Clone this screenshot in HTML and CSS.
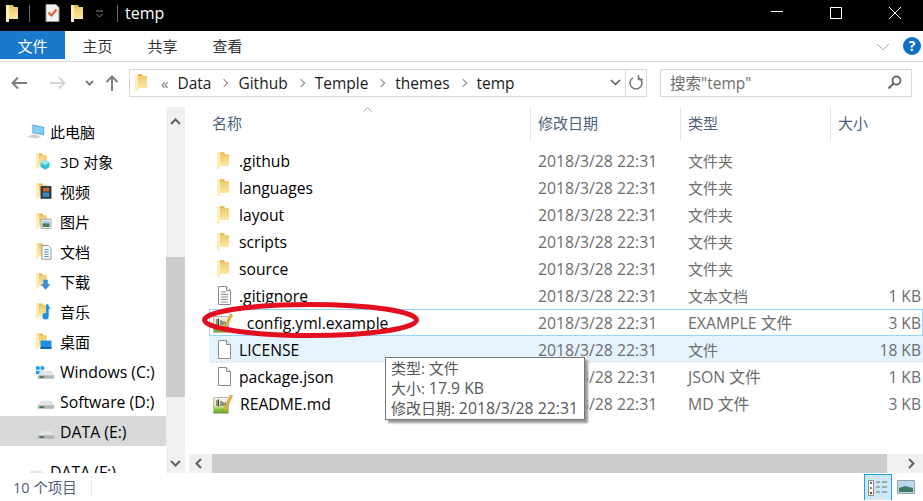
FILE: index.html
```html
<!DOCTYPE html>
<html lang="zh-CN">
<head>
    <meta charset="UTF-8">
    <meta name="viewport" content="width=device-width, initial-scale=1.0">
    <title>temp</title>
    <link rel="stylesheet" href="styles.css">
</head>
<body>
<svg class="defs" width="0" height="0">
    <defs>
        <linearGradient id="fold" x1="0" y1="0" x2="0" y2="1">
            <stop offset="0" stop-color="#eec566"/>
            <stop offset=".5" stop-color="#f8d98a"/>
            <stop offset="1" stop-color="#fdeeb4"/>
        </linearGradient>
        <linearGradient id="paper" x1="0" y1="0" x2="0" y2="1">
            <stop offset="0" stop-color="#f4f4ea"/>
            <stop offset=".5" stop-color="#dfe8b8"/>
            <stop offset=".75" stop-color="#8cc63e"/>
            <stop offset="1" stop-color="#5c9e24"/>
        </linearGradient>
        <symbol id="folder" viewBox="0 0 12 17">
            <path d="M0 0h7l1 2h4v12H3v3H0z" fill="url(#fold)"/>
            <path d="M0 0h3v17l-3-2z" fill="#feeeb8"/>
            <path d="M3 1h4v1H3z" fill="#e0b44c"/>
        </symbol>
        <symbol id="doc" viewBox="0 0 15 19">
            <path d="M1.500.500h8l4 4v14h-12z" fill="#fff" stroke="#8c8c8c"/>
            <path d="M9.500.500v4h4" fill="#eee" stroke="#8c8c8c"/>
        </symbol>
        <symbol id="txt" viewBox="0 0 15 19">
            <path d="M1.500.500h8l4 4v14h-12z" fill="#fff" stroke="#8c8c8c"/>
            <path d="M9.500.500v4h4" fill="#eee" stroke="#8c8c8c"/>
            <path d="M4 6h5M4 8.500h7M4 11h7M4 13.500h7M4 16h7" stroke="#8c8c8c" fill="none"/>
        </symbol>
        <symbol id="note" viewBox="0 0 20 20">
            <path d="M.5 3.500h15v16H.5z" fill="url(#paper)" stroke="#b9b9b0"/>
            <path d="M4 6v6M5.500 5.500v7M8 7v5M10 8v4M12 8.500v3" stroke="#3c3c3c" fill="none"/>
            <path d="M11 14.500L17.500 1l2 1-6.500 13.500-2.800 2z" fill="#efb93c" stroke="#a8782a" stroke-width=".5"/>
        </symbol>
        <symbol id="disk" viewBox="0 0 20 12">
            <path d="M1 7l4-5h11l3 5z" fill="#e4e4e4"/>
            <path d="M1 7h18v4H1z" fill="#b4b4b4"/>
            <path d="M3 8h5v2H3z" fill="#3a7a45"/>
        </symbol>
    </defs>
</svg>

<div class="window">
    <!-- barre de titre -->
    <header class="titlebar">
        <svg class="ico-folder"><use href="#folder"/></svg>
        <span class="bar-sep sep-a"></span>
        <svg class="ico-check" viewBox="0 0 15 18">
            <path d="M1 .5h10l3 3v14H1z" fill="#f4f4f4" stroke="#999"/>
            <path d="M3.500 8.500l3 3 5-6" stroke="#e8542a" stroke-width="2" fill="none"/>
        </svg>
        <svg class="ico-folder"><use href="#folder"/></svg>
        <svg class="ico-drop" viewBox="0 0 9 8"><path d="M1 1h7M1.500 4l3 3 3-3" stroke="#888" fill="none"/></svg>
        <span class="bar-sep sep-b"></span>
        <span class="title">temp</span>
        <div class="winbtns">
            <svg width="14" height="14" viewBox="0 0 14 14"><path d="M1 5.500h12" stroke="#fff" fill="none"/></svg>
            <svg width="14" height="14" viewBox="0 0 14 14"><path d="M1.500 1.500h11v11h-11z" stroke="#fff" fill="none"/></svg>
            <svg width="14" height="14" viewBox="0 0 14 14"><path d="M1 1l12 12M13 1L1 13" stroke="#fff" fill="none"/></svg>
        </div>
    </header>

    <!-- onglets -->
    <nav class="ribbon">
        <span class="tab tab-file">文件</span>
        <span class="tab">主页</span>
        <span class="tab">共享</span>
        <span class="tab">查看</span>
        <svg class="ribbon-chev" width="14" height="8" viewBox="0 0 14 8"><path d="M1 1l6 6 6-6" stroke="#a9a9a9" fill="none"/></svg>
        <span class="help">?</span>
    </nav>

    <!-- barre d'adresse -->
    <div class="navbar">
        <svg class="nav-btn" width="16" height="14" viewBox="0 0 16 14"><path d="M16 7H2M7 1.500L1.500 7 7 12.500" stroke="#7d7d7d" stroke-width="2" fill="none"/></svg>
        <svg class="nav-btn fwd" width="16" height="14" viewBox="0 0 16 14"><path d="M0 7h14M9 1.500L14.500 7 9 12.500" stroke="#d4d4d4" stroke-width="2" fill="none"/></svg>
        <svg class="nav-btn hist" width="9" height="6" viewBox="0 0 9 6"><path d="M1 1l3.500 3.500L8 1" stroke="#7d7d7d" stroke-width="2" fill="none"/></svg>
        <svg class="nav-btn up" width="14" height="16" viewBox="0 0 14 16"><path d="M7 16V2M1.500 7L7 1.500 12.500 7" stroke="#7d7d7d" stroke-width="2" fill="none"/></svg>
        <div class="address">
            <svg class="ico-folder"><use href="#folder"/></svg>
            <span class="crumb-more">«</span>
            <span class="crumb">Data</span><span class="gt"></span>
            <span class="crumb">Github</span><span class="gt"></span>
            <span class="crumb">Temple</span><span class="gt"></span>
            <span class="crumb">themes</span><span class="gt"></span>
            <span class="crumb">temp</span>
            <div class="addr-end">
                <svg width="11" height="7" viewBox="0 0 11 7"><path d="M1 1l4.500 4.500L10 1" stroke="#555" stroke-width="1.500" fill="none"/></svg>
                <span class="refresh">
                    <svg width="15" height="16" viewBox="0 0 15 16"><path d="M4 2.800a6 6 0 1 0 6 0M9.500 0v4.500H14" stroke="#777" stroke-width="1.500" fill="none"/></svg>
                </span>
            </div>
        </div>
        <div class="search">
            <span>搜索"temp"</span>
            <svg width="15" height="15" viewBox="0 0 15 15"><circle cx="9.500" cy="5.500" r="4" stroke="#666" stroke-width="1.800" fill="none"/><path d="M6.500 8.500L1.500 13.500" stroke="#666" stroke-width="2.200"/></svg>
        </div>
    </div>

    <div class="main">
        <!-- panneau de gauche -->
        <aside class="side">
            <ul class="tree">
                <li class="lvl0">
                    <svg class="tree-ico" viewBox="0 0 22 18"><path d="M7 1l13 3v9L7 11z" fill="#5aa6d8"/><path d="M8 2.500l11 2.500v7L8 10z" fill="#7fd0f4"/><path d="M1 15l7-3 9 2-5 3z" fill="#d0d0d0"/></svg>
                    此电脑
                </li>
                <li>
                    <svg class="tree-ico" viewBox="0 0 22 18"><use href="#folder" width="12" height="17"/><path d="M5 10l5-3 5 3v5l-5 3-5-3z" fill="#35c0d8"/><path d="M5 10l5 3 5-3-5-3z" fill="#9fe6f2"/></svg>
                    3D 对象
                </li>
                <li>
                    <svg class="tree-ico" viewBox="0 0 22 18"><use href="#folder" width="12" height="17"/><path d="M5 3h12v14H5z" fill="#2c3a44"/><path d="M7.500 5h7v4h-7z" fill="#c8642c"/><path d="M7.500 10h7v5h-7z" fill="#3a8ac0"/></svg>
                    视频
                </li>
                <li>
                    <svg class="tree-ico" viewBox="0 0 22 18"><use href="#folder" width="12" height="17"/><path d="M5.500 6.500h11v10h-11z" fill="#fff" stroke="#999"/><path d="M7 8h8v3H7z" fill="#a9cbe6"/><path d="M7 11h8v4H7z" fill="#4e7a5c"/></svg>
                    图片
                </li>
                <li>
                    <svg class="tree-ico" viewBox="0 0 22 18"><use href="#folder" width="12" height="17"/><path d="M6.500 2.500h7l3 3v12h-10z" fill="#fff" stroke="#888"/><path d="M9 7h5M9 9.500h5M9 12h5M9 14.500h5" stroke="#3c86c8" fill="none"/></svg>
                    文档
                </li>
                <li>
                    <svg class="tree-ico" viewBox="0 0 22 18"><use href="#folder" width="12" height="17"/><path d="M8 7h5v5h3l-5.500 6L5 12h3z" fill="#3a8edb"/></svg>
                    下载
                </li>
                <li>
                    <svg class="tree-ico" viewBox="0 0 22 18"><use href="#folder" width="12" height="17"/><path d="M11 1h2.500c0 3 2.500 3 2.500 6l-2-1.500V14a3.500 3.500 0 1 1-3-3.200z" fill="#1f8fe6"/></svg>
                    音乐
                </li>
                <li>
                    <svg class="tree-ico" viewBox="0 0 22 18"><use href="#folder" width="12" height="17"/><path d="M5 8h12v9H5z" fill="#1f8fe6"/><path d="M5 15h12v2H5z" fill="#0e5a9c"/></svg>
                    桌面
                </li>
                <li class="drive">
                    <svg class="tree-ico" viewBox="0 0 22 18"><path d="M0 2h4v4H0zM5 2h4v4H5zM0 7h4v4H0zM5 7h4v4H5z" fill="#1ba1e2"/><g transform="translate(1 5)"><use href="#disk" width="20" height="12"/></g></svg>
                    Windows (C:)
                </li>
                <li class="drive">
                    <svg class="tree-ico" viewBox="0 0 22 18"><g transform="translate(1 5)"><use href="#disk" width="20" height="12"/></g></svg>
                    Software (D:)
                </li>
                <li class="drive current">
                    <svg class="tree-ico" viewBox="0 0 22 18"><g transform="translate(1 5)"><use href="#disk" width="20" height="12"/></g></svg>
                    DATA (E:)
                </li>
                <li class="drive lvl0 net">
                    <svg class="tree-ico" viewBox="0 0 22 18"><g transform="translate(1 5)"><use href="#disk" width="20" height="12"/></g></svg>
                    DATA (F:)
                </li>
            </ul>
            <div class="vscroll">
                <svg width="11" height="7" viewBox="0 0 11 7"><path d="M1 6l4.500-4.500L10 6" stroke="#606060" stroke-width="2" fill="none"/></svg>
                <div class="vtrack"><div class="vthumb"></div></div>
                <svg width="11" height="7" viewBox="0 0 11 7"><path d="M1 1l4.500 4.500L10 1" stroke="#606060" stroke-width="2" fill="none"/></svg>
            </div>
        </aside>

        <!-- liste des fichiers -->
        <section class="files">
            <div class="cols">
                <span class="col col-name">名称<svg class="sort" width="9" height="5" viewBox="0 0 9 5"><path d="M.5 4.500l4-4 4 4" stroke="#a0a0a0" fill="none"/></svg></span>
                <span class="col">修改日期</span>
                <span class="col">类型</span>
                <span class="col">大小</span>
            </div>
            <div class="rows">
                <div class="row"><span class="name"><svg class="file-ico folder"><use href="#folder"/></svg>.github</span><span class="cell date">2018/3/28 22:31</span><span class="cell">文件夹</span><span class="size"></span></div>
                <div class="row"><span class="name"><svg class="file-ico folder"><use href="#folder"/></svg>languages</span><span class="cell date">2018/3/28 22:31</span><span class="cell">文件夹</span><span class="size"></span></div>
                <div class="row"><span class="name"><svg class="file-ico folder"><use href="#folder"/></svg>layout</span><span class="cell date">2018/3/28 22:31</span><span class="cell">文件夹</span><span class="size"></span></div>
                <div class="row"><span class="name"><svg class="file-ico folder"><use href="#folder"/></svg>scripts</span><span class="cell date">2018/3/28 22:31</span><span class="cell">文件夹</span><span class="size"></span></div>
                <div class="row"><span class="name"><svg class="file-ico folder"><use href="#folder"/></svg>source</span><span class="cell date">2018/3/28 22:31</span><span class="cell">文件夹</span><span class="size"></span></div>
                <div class="row"><span class="name"><svg class="file-ico"><use href="#txt"/></svg>.gitignore</span><span class="cell date">2018/3/28 22:31</span><span class="cell">文本文档</span><span class="size">1 KB</span></div>
                <div class="row focused"><span class="name"><svg class="file-ico wide"><use href="#note"/></svg>_config.yml.example</span><span class="cell date">2018/3/28 22:31</span><span class="cell date">EXAMPLE 文件</span><span class="size">3 KB</span></div>
                <div class="row hovered"><span class="name"><svg class="file-ico"><use href="#doc"/></svg>LICENSE</span><span class="cell date">2018/3/28 22:31</span><span class="cell">文件</span><span class="size">18 KB</span></div>
                <div class="row"><span class="name"><svg class="file-ico"><use href="#doc"/></svg>package.json</span><span class="cell date">2018/3/28 22:31</span><span class="cell date">JSON 文件</span><span class="size">1 KB</span></div>
                <div class="row"><span class="name"><svg class="file-ico wide"><use href="#note"/></svg>README.md</span><span class="cell date">2018/3/28 22:31</span><span class="cell date">MD 文件</span><span class="size">3 KB</span></div>
            </div>
            <div class="hscroll">
                <svg width="7" height="11" viewBox="0 0 7 11"><path d="M6 1L1.500 5.500 6 10" stroke="#606060" stroke-width="2" fill="none"/></svg>
                <div class="hthumb"></div>
                <svg width="7" height="11" viewBox="0 0 7 11"><path d="M1 1l4.500 4.500L1 10" stroke="#606060" stroke-width="2" fill="none"/></svg>
            </div>
        </section>
    </div>

    <footer class="status">
        <span class="count">10 个项目</span>
        <div class="views">
            <span class="view on">
                <svg width="20" height="16" viewBox="0 0 20 16"><path d="M.5.500h5v15h-5z" fill="#fff" stroke="#8a8a8a"/><path d="M2 2h2v2H2z" fill="#557a8c"/><path d="M2 7h2v2H2z" fill="#8a8a6a"/><path d="M2 12h2v2H2z" fill="#b8321e"/><path d="M8 2h4M14 2h5M8 7h4M14 7h5M8 12h4M14 12h5" stroke="#707070" fill="none"/></svg>
            </span>
            <span class="view">
                <svg width="18" height="14" viewBox="0 0 18 14"><path d="M.5.500h17v13H.5z" fill="#bcd8f0" stroke="#a0a0a0"/><path d="M2 8l6-2 8 2v4H2z" fill="#3f7a6a"/></svg>
            </span>
        </div>
    </footer>

    <svg class="annot" width="224" height="44" viewBox="0 0 224 44"><ellipse cx="111.500" cy="20" rx="106" ry="15.500" stroke="#e30f1f" stroke-width="5" fill="none"/></svg>

    <div class="tip">
        <div>类型: 文件</div>
        <div>大小: <span class="tip-num">17.9 KB</span></div>
        <div>修改日期: <span class="tip-num">2018/3/28 22:31</span></div>
    </div>
</div>
</body>
</html>
```

FILE: styles.css
```css
/* Base */
* {
    box-sizing: border-box;
}
html, body {
    margin: 0;
    height: 100%;
    overflow: hidden;
    background: #fff;
}
body {
    font-family: "Open Sans", "Noto Sans CJK SC", sans-serif;
    font-size: 15px;
    color: #000;
}
.defs {
    position: absolute;
}
.window {
    position: relative;
    width: 923px;
    height: 501px;
    display: flex;
    flex-direction: column;
    overflow: hidden;
}
.ico-folder {
    width: 12px;
    height: 17px;
    flex: none;
}

/* Barre de titre */
.titlebar {
    height: 31px;
    flex: none;
    background: #000;
    display: flex;
    align-items: center;
    padding: 0 0 5px 6px;
    color: #fff;
}
.bar-sep {
    width: 1px;
    height: 17px;
    background: #6a6a6a;
}
.sep-a {
    margin: 0 15px 0 11px;
}
.ico-check {
    width: 15px;
    height: 18px;
    margin-right: 11px;
}
.ico-drop {
    width: 9px;
    height: 8px;
    margin: 2px 0 0 12px;
}
.sep-b {
    margin: 0 7px 0 13px;
}
.title {
    font-size: 16px;
}
.winbtns {
    margin-left: auto;
    margin-right: 21px;
    display: flex;
    gap: 45px;
    padding-bottom: 1px;
}

/* Onglets */
.ribbon {
    height: 31px;
    flex: none;
    display: flex;
    align-items: flex-start;
    border-bottom: 1px solid #dadada;
    padding-right: 2px;
}
.tab {
    width: 65px;
    height: 28px;
    line-height: 30px;
    text-align: center;
    color: #333;
}
.tab-file {
    background: #1979ca;
    color: #fff;
}
.ribbon-chev {
    margin: 12px 0 0 auto;
}
.help {
    width: 18px;
    height: 18px;
    margin: 6px 0 0 13px;
    border-radius: 50%;
    background: #0f6fc6;
    color: #fff;
    font-size: 14px;
    font-weight: bold;
    line-height: 18px;
    text-align: center;
}

/* Barre d'adresse */
.navbar {
    height: 41px;
    flex: none;
    display: flex;
    align-items: center;
    padding: 0 11px;
}
.nav-btn {
    flex: none;
}
.fwd {
    margin-left: 23px;
}
.hist {
    margin-left: 19px;
}
.up {
    margin: 0 10px 0 11px;
}
.address {
    width: 518px;
    height: 28px;
    border: 1px solid #d9d9d9;
    display: flex;
    align-items: center;
    padding-left: 5px;
    color: #1a1a1a;
}
.crumb {
    font-size: 15.500px;
}
.crumb-more {
    margin: 0 9px 0 14px;
    color: #777;
}
.gt {
    width: 6px;
    height: 6px;
    border-top: 1.500px solid #888;
    border-right: 1.500px solid #888;
    transform: rotate(45deg);
    margin: 0 11px 0 10px;
}
.addr-end {
    margin-left: auto;
    height: 100%;
    display: flex;
    align-items: center;
    gap: 4px;
}
.refresh {
    width: 21px;
    height: 100%;
    border-left: 1px solid #d9d9d9;
    display: flex;
    align-items: center;
    justify-content: center;
}
.search {
    width: 252px;
    height: 28px;
    margin-left: 13px;
    border: 1px solid #d9d9d9;
    display: flex;
    align-items: center;
    justify-content: space-between;
    padding: 0 9px;
    color: #6d6d6d;
    font-size: 15.500px;
}

/* Panneau de gauche */
.main {
    flex: 1;
    min-height: 0;
    display: flex;
}
.side {
    width: 189px;
    flex: none;
    display: flex;
    border-right: 3px solid #fff;
    overflow: hidden;
}
.tree {
    list-style: none;
    margin: 13px 0 0;
    padding: 0;
    width: 166px;
    flex: none;
}
.tree li {
    height: 30px;
    display: flex;
    align-items: center;
    padding-left: 36px;
    gap: 4px;
    white-space: nowrap;
}
.tree li.drive {
    font-size: 15.800px;
    padding-top: 2px;
}
.tree li.lvl0 {
    padding-left: 26px;
}
.tree li.current {
    background: #d9d9d9;
}
.tree li.net {
    margin-top: 10px;
}
.tree-ico {
    width: 20px;
    height: 17px;
    flex: none;
}
.vscroll {
    width: 19px;
    flex: none;
    background: #f0f0f0;
    display: flex;
    flex-direction: column;
    align-items: center;
    justify-content: space-between;
    padding: 11px 0 6px;
    margin-top: 4px;
}
.vtrack {
    flex: 1;
    width: 100%;
    display: flex;
    align-items: flex-start;
}
.vthumb {
    width: 100%;
    height: 140px;
    margin-top: 132px;
    background: #cdcdcd;
}

/* Liste des fichiers */
.files {
    flex: 1;
    min-width: 0;
    display: flex;
    flex-direction: column;
    position: relative;
}
.cols {
    height: 38px;
    flex: none;
    padding: 4px 0 0 20px;
    display: grid;
    grid-template-columns: 321px 150px 150px 93px;
    color: #4c607a;
}
.col {
    border-left: 1px solid #e5e5e5;
    padding-left: 7px;
    line-height: 33px;
}
.col-name {
    border-left: 0;
    padding-left: 3px;
    position: relative;
}
.sort {
    position: absolute;
    left: 154px;
    top: 0;
}
.rows {
    flex: 1;
    min-height: 0;
    padding: 6px 0 0 20px;
}
.row {
    height: 27px;
    display: grid;
    grid-template-columns: 321px 150px 150px 93px;
    align-items: center;
}
.row.focused {
    box-shadow: inset 0 0 0 1px #99d1ff;
}
.row.hovered {
    background: #e5f3ff;
}
.name {
    display: flex;
    align-items: center;
    padding-left: 8px;
    font-size: 15.700px;
}
.file-ico {
    width: 15px;
    height: 19px;
    margin-right: 7px;
    flex: none;
}
.file-ico.folder {
    width: 12px;
    height: 17px;
    margin-right: 10px;
}
.file-ico.wide {
    width: 20px;
    height: 20px;
    margin: 0 7px 0 -4px;
}
.cell {
    padding-left: 8px;
    color: #6d6d6d;
    white-space: nowrap;
}
.date {
    font-size: 15.800px;
}
.size {
    text-align: right;
    padding-right: 2px;
    color: #6d6d6d;
    font-size: 15.600px;
}
.hscroll {
    height: 19px;
    flex: none;
    background: #f0f0f0;
    display: flex;
    align-items: center;
    padding: 0 6px;
}
.hthumb {
    width: 675px;
    height: 100%;
    margin: 0 21px 0 10px;
    background: #cdcdcd;
}

/* Barre d'etat */
.status {
    height: 28px;
    flex: none;
    display: flex;
    align-items: center;
    padding: 0 0 2px 13px;
    color: #4c607a;
    font-size: 14.500px;
}
.count {
    width: 79px;
    border-right: 1px solid #ececec;
}
.views {
    margin: 0 8px -2px auto;
    height: 100%;
    display: flex;
    align-items: center;
    gap: 5px;
}
.view {
    display: flex;
    align-items: center;
    justify-content: center;
    height: 100%;
}
.view.on {
    width: 28px;
    background: #cce8f6;
    border: 1px solid #26a0da;
    border-bottom: 0;
}

/* Annotation et infobulle */
.annot {
    position: absolute;
    left: 199px;
    top: 300px;
}
.tip {
    position: absolute;
    left: 385px;
    top: 357px;
    width: 200px;
    height: 63px;
    background: #fff;
    border: 1px solid #767676;
    box-shadow: 3px 3px 2px #9a9a9a;
    padding: 0 5px;
    color: #575757;
    line-height: 20px;
    white-space: nowrap;
}
.tip-num {
    font-size: 15.800px;
}
```
